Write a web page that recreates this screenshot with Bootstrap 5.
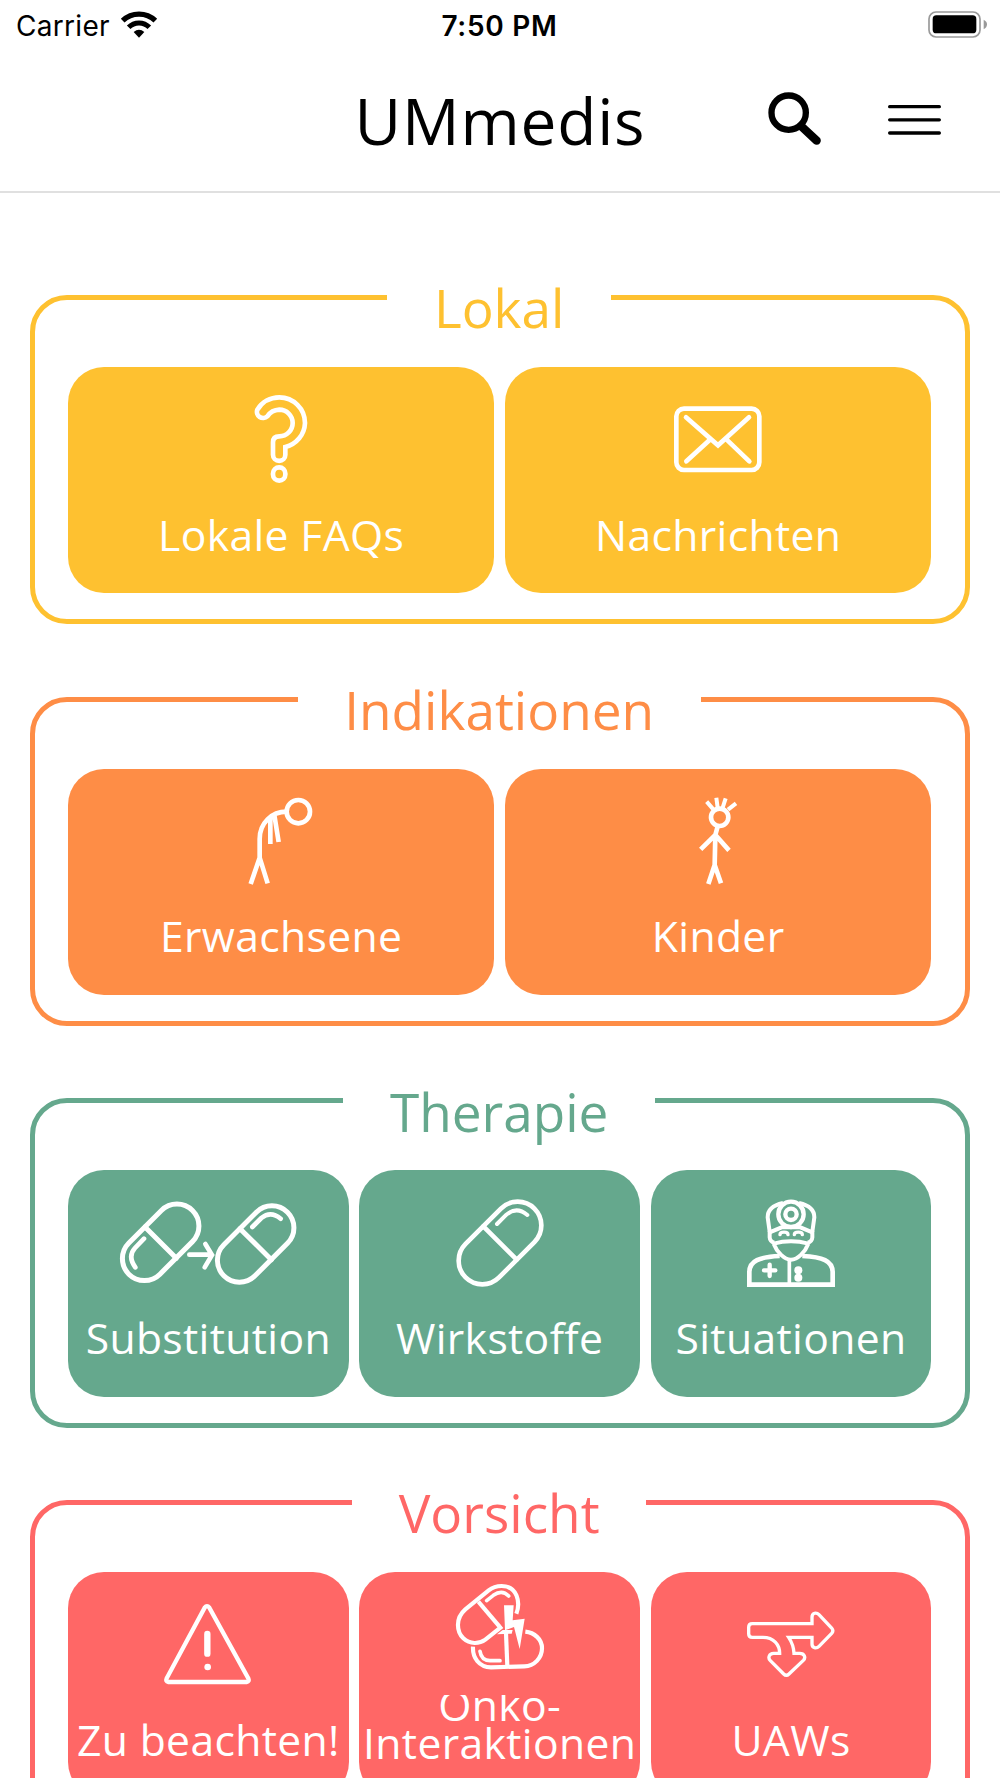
<!DOCTYPE html>
<html lang="de">
<head>
    <meta charset="UTF-8">
    <meta name="viewport" content="width=device-width, initial-scale=1">
    <title>UMmedis</title>
    <link href="https://cdn.jsdelivr.net/npm/bootstrap@5.3.0/dist/css/bootstrap.min.css" rel="stylesheet">
    <style>
        body {
            height: 100vh;
            overflow: hidden;
            background: #fff;
            color: #000;
            font-family: "Open Sans", "Noto Sans", sans-serif;
        }
        svg {
            display: block;
            flex: none;
            overflow: visible;
        }

        /* Status bar */
        .status-bar {
            height: 48px;
            padding: 0 13px 0 16px;
            font-family: Inter, "Liberation Sans", sans-serif;
            font-size: 28px;
            line-height: 48px;
        }
        .status-text {
            padding-top: 3px;
        }
        .carrier {
            letter-spacing: 0.3px;
        }
        .clock {
            margin-right: 4px;
            font-weight: 600;
            letter-spacing: 0.7px;
        }
        .wifi {
            margin-left: 11px;
        }

        /* Header */
        .app-header {
            height: 145px;
            padding: 0 59px;
            border-bottom: 2px solid #e0e0e0;
        }
        .app-title {
            padding-top: 2px;
            font-size: 64px;
            line-height: 80px;
            letter-spacing: 0.8px;
        }
        .header-actions {
            gap: 67px;
        }
        .search-icon {
            margin-bottom: 2px;
        }

        /* Groups */
        .group-list {
            padding: 102px 30px 0;
            gap: 72.4px;
        }
        .group-box {
            height: 329.3px;
            flex: none;
            padding: 0 33.7px 0 33px;
            border: 5px solid var(--tone);
            border-radius: 37px;
        }
        .group-title {
            margin: -21.7px 1px 28.5px 0;
            padding: 0 46.7px;
            background: #fff;
            color: var(--tone);
            font-size: 53.1px;
            font-weight: 400;
            line-height: 60px;
        }
        .tile-row {
            gap: 10.67px;
        }
        .tile {
            flex: 1 1 0;
            min-width: 0;
            height: 226.4px;
            padding-top: 28.6px;
            border-radius: 36px;
            background: var(--tone);
            color: #fff;
            text-decoration: none;
        }
        .tile-label {
            margin-top: 21.3px;
            font-size: 42.67px;
            line-height: 60px;
            letter-spacing: 0.35px;
            white-space: nowrap;
        }
        .tile-tall {
            padding-top: 10.7px;
        }
        .tile-tall .tile-label {
            height: 80px;
            margin-top: 24.3px;
            overflow: hidden;
            line-height: 38.4px;
            text-align: center;
        }
        .tile-tall .tile-label span {
            display: block;
            margin-top: -9px;
        }
        .tone-yellow { --tone: #fec130; }
        .tone-orange { --tone: #fe8d46; }
        .tone-green { --tone: #65a88d; }
        .tone-red { --tone: #ff6766; }

        .line-icon {
            fill: none;
            stroke: #fff;
            stroke-width: 14;
        }
        .line-icon .solid {
            fill: #fff;
            stroke: none;
        }
    </style>
</head>
<body>

    <!-- Status bar -->
    <div class="status-bar d-flex align-items-center">
        <div class="d-flex align-items-center w-100">
            <span class="status-text carrier">Carrier</span>
            <svg class="wifi" width="36" height="27" viewBox="0 0 108 81" fill="none" stroke="#000">
                <path d="M5 29 A71 71 0 0 1 103 29" stroke-width="16"/>
                <path d="M23 49 A43 43 0 0 1 85 49" stroke-width="15"/>
                <path d="M38 63 Q54 49 70 63 L54 80Z" fill="#000" stroke="none"/>
            </svg>
        </div>
        <span class="status-text clock text-nowrap">7:50 PM</span>
        <div class="d-flex justify-content-end w-100">
            <svg width="59" height="27" viewBox="0 0 177 81">
                <rect x="3" y="3" width="153" height="75" rx="21" fill="none" stroke="#999" stroke-width="5"/>
                <rect x="14" y="13" width="131" height="54" rx="11"/>
                <path d="M167 26 Q177 31 177 40 Q177 50 167 55Z" fill="#999"/>
            </svg>
        </div>
    </div>

    <!-- Header -->
    <header class="app-header d-flex align-items-center">
        <div class="w-100"></div>
        <div class="app-title">UMmedis</div>
        <div class="header-actions d-flex align-items-center justify-content-end w-100">
            <svg class="search-icon" width="53" height="53" viewBox="0 0 159 159" fill="none" stroke="#000">
                <circle cx="62" cy="62" r="51.5" stroke-width="19"/>
                <path d="M99 102 L146 146" stroke-width="25" stroke-linecap="round"/>
            </svg>
            <svg width="53" height="30" viewBox="0 0 159 90" stroke="#000" stroke-width="10" stroke-linecap="round">
                <path d="M5 5H154M5 44.500H154M5 84H154"/>
            </svg>
        </div>
    </header>

    <main class="group-list d-flex flex-column">
        <!-- Lokal -->
        <section class="group-box tone-yellow d-flex flex-column align-items-center">
            <h2 class="group-title">Lokal</h2>
            <div class="tile-row d-flex w-100">
                <a class="tile d-flex flex-column align-items-center" href="#">
                    <svg class="line-icon" width="88" height="88" viewBox="0 0 264 264">
                        <path d="M61 44 A77 77 0 0 1 127 7 A77 77 0 0 1 204 84 A77 77 0 0 1 145 156 V179 A18.500 18.500 0 0 1 108 179 V142 Q108 124 127 124 A40 40 0 0 0 127 44 Q104 45 91 64 A18.500 18.500 0 0 1 61 44Z"/>
                        <rect x="108" y="217" width="37" height="40" rx="18.500"/>
                    </svg>
                    <span class="tile-label">Lokale FAQs</span>
                </a>
                <a class="tile d-flex flex-column align-items-center" href="#">
                    <svg class="line-icon" width="88" height="88" viewBox="0 0 264 264" stroke-linecap="round">
                        <rect x="7" y="41" width="249" height="184" rx="23"/>
                        <path d="M36 67 L132 151 L225 67M106 136 L37 199M158 134 L226 199"/>
                    </svg>
                    <span class="tile-label">Nachrichten</span>
                </a>
            </div>
        </section>

        <!-- Indikationen -->
        <section class="group-box tone-orange d-flex flex-column align-items-center">
            <h2 class="group-title">Indikationen</h2>
            <div class="tile-row d-flex w-100">
                <a class="tile d-flex flex-column align-items-center" href="#">
                    <svg class="line-icon" width="88" height="88" viewBox="0 0 264 264">
                        <circle cx="184" cy="44" r="35"/>
                        <path d="M149 44 C104 44 68 78 68 126 V182M41 261 L68 182 L92 259M100 60 V141M112 54 L125 135"/>
                    </svg>
                    <span class="tile-label">Erwachsene</span>
                </a>
                <a class="tile d-flex flex-column align-items-center" href="#">
                    <svg class="line-icon" width="88" height="88" viewBox="0 0 264 264">
                        <circle cx="137" cy="61" r="26"/>
                        <path stroke-width="12" d="M118 37 L98 14M131 32 L127 2M146 32 L155 4M162 38 L186 19"/>
                        <path d="M131 88 L124 114 L122 204M80 157 L124 114 L165 160M103 261 L122 204 L141 259"/>
                    </svg>
                    <span class="tile-label">Kinder</span>
                </a>
            </div>
        </section>

        <!-- Therapie -->
        <section class="group-box tone-green d-flex flex-column align-items-center">
            <h2 class="group-title">Therapie</h2>
            <div class="tile-row d-flex w-100">
                <a class="tile d-flex flex-column align-items-center" href="#">
                    <svg class="line-icon" width="176.67" height="88" viewBox="0 0 530 264" stroke-linecap="round">
                        <g stroke-width="15">
                            <rect x="-13" y="64" width="270" height="132" rx="66" transform="rotate(-45 122 130)"/>
                            <path d="M75 84 L169 178"/>
                            <rect x="272" y="69" width="270" height="132" rx="66" transform="rotate(-45 407 135)"/>
                            <path d="M360 89 L454 182"/>
                        </g>
                        <path d="M72 119 L45 147 Q22 172 46 205M397 84 L424 57 Q452 34 482 59"/>
                        <path d="M208 167 H275M256 135 L276 168 L254 205"/>
                    </svg>
                    <span class="tile-label">Substitution</span>
                </a>
                <a class="tile d-flex flex-column align-items-center" href="#">
                    <svg class="line-icon" width="88" height="88" viewBox="0 0 264 264" stroke-linecap="round">
                        <rect x="-14" y="61" width="292" height="142" rx="71" transform="rotate(-45 132 132)"/>
                        <path d="M82 82 L182 182"/>
                        <path stroke-width="12" d="M123 75 L151 47 Q182 21 214 48"/>
                    </svg>
                    <span class="tile-label">Wirkstoffe</span>
                </a>
                <a class="tile d-flex flex-column align-items-center" href="#">
                    <svg class="line-icon" width="88" height="88" viewBox="0 0 264 264">
                        <path d="M98 171 C38 174 7 184 7 220 V257 H257 V220 C257 184 226 174 166 171"/>
                        <path stroke-width="11" d="M127 184 V257"/>
                        <path stroke-width="12" d="M80 134 Q132 120 184 134M80 134 C90 160 112 182 132 182 C152 182 174 160 184 134"/>
                        <path stroke-width="12" d="M68 97 V115 Q69 128 82 131M196 97 V115 Q195 128 182 131"/>
                        <path stroke-width="12" d="M68 100 L104 85 H160 L196 100M68 98 L62 55 C62 32 80 18 108 12M196 98 L202 55 C202 32 184 18 156 12"/>
                        <circle cx="132" cy="46" r="38" stroke-width="13"/>
                        <circle cx="132" cy="46" r="17" stroke-width="13"/>
                        <path stroke-width="10" stroke-linecap="round" d="M99 107 C99 97 123 97 123 107M142 107 C142 97 166 97 166 107"/>
                        <path stroke-width="13" stroke-linecap="round" d="M51 214 H85M68 197 V231"/>
                        <g class="solid">
                            <circle cx="154" cy="214" r="12"/>
                            <circle cx="154" cy="236" r="12"/>
                        </g>
                    </svg>
                    <span class="tile-label">Situationen</span>
                </a>
            </div>
        </section>

        <!-- Vorsicht -->
        <section class="group-box tone-red d-flex flex-column align-items-center">
            <h2 class="group-title">Vorsicht</h2>
            <div class="tile-row d-flex w-100">
                <a class="tile d-flex flex-column align-items-center" href="#">
                    <svg class="line-icon" width="88" height="88" viewBox="0 0 264 264" stroke-linecap="round">
                        <path stroke-width="13" d="M122 23 Q129 14 136 23 L253 235 Q257 245 248 246 H13 Q4 245 8 235Z"/>
                        <path stroke-width="19" d="M130 102 V161"/>
                        <circle class="solid" cx="131" cy="201" r="10"/>
                    </svg>
                    <span class="tile-label">Zu beachten!</span>
                </a>
                <a class="tile tile-tall d-flex flex-column align-items-center" href="#">
                    <svg class="line-icon" width="88" height="88" viewBox="0 0 264 264">
                        <g stroke-width="12.500">
                            <path d="M181 92 C194 58 184 9 137 9 C118 9 108 14 98 22 L28 79 C-3 106 2 147 22 166 C42 185 70 183 88 170 L138 130"/>
                            <path d="M67 56 L130 130"/>
                            <path d="M51 191 C49 225 70 253 105 253 L205 250 C235 249 258 225 258 196 C258 168 235 149 208 146"/>
                            <path d="M150 150 L154 250"/>
                        </g>
                        <path stroke-width="11" stroke-linecap="round" d="M92 53 L112 37 Q138 18 158 39M72 205 Q76 233 102 233 H132"/>
                        <path class="solid" d="M123 154 L140 141 L170 141 L167 152Z"/>
                        <path class="solid" d="M144 67 H173 L170 112 L206 107 L191 198 L174 132 L147 142Z"/>
                    </svg>
                    <div class="tile-label"><span>Onko-<br>Interaktionen</span></div>
                </a>
                <a class="tile d-flex flex-column align-items-center" href="#">
                    <svg class="line-icon" width="88" height="88" viewBox="0 0 264 264">
                        <path stroke-width="10" d="M16 71 H195 V52 C195 38 208 36 216 44 L254 84 Q261 92 254 100 L216 139 C208 147 195 144 195 132 V112 H125 C135 127 140 140 141 160 H158 C173 160 177 173 169 181 L126 222 Q118 230 110 222 L70 182 C62 174 66 160 80 160 H98 C98 135 80 112 48 112 H16 Q5 112 5 101 V82 Q5 71 16 71Z"/>
                    </svg>
                    <span class="tile-label">UAWs</span>
                </a>
            </div>
        </section>
    </main>

    <script src="https://cdn.jsdelivr.net/npm/bootstrap@5.3.0/dist/js/bootstrap.bundle.min.js"></script>
</body>
</html>
